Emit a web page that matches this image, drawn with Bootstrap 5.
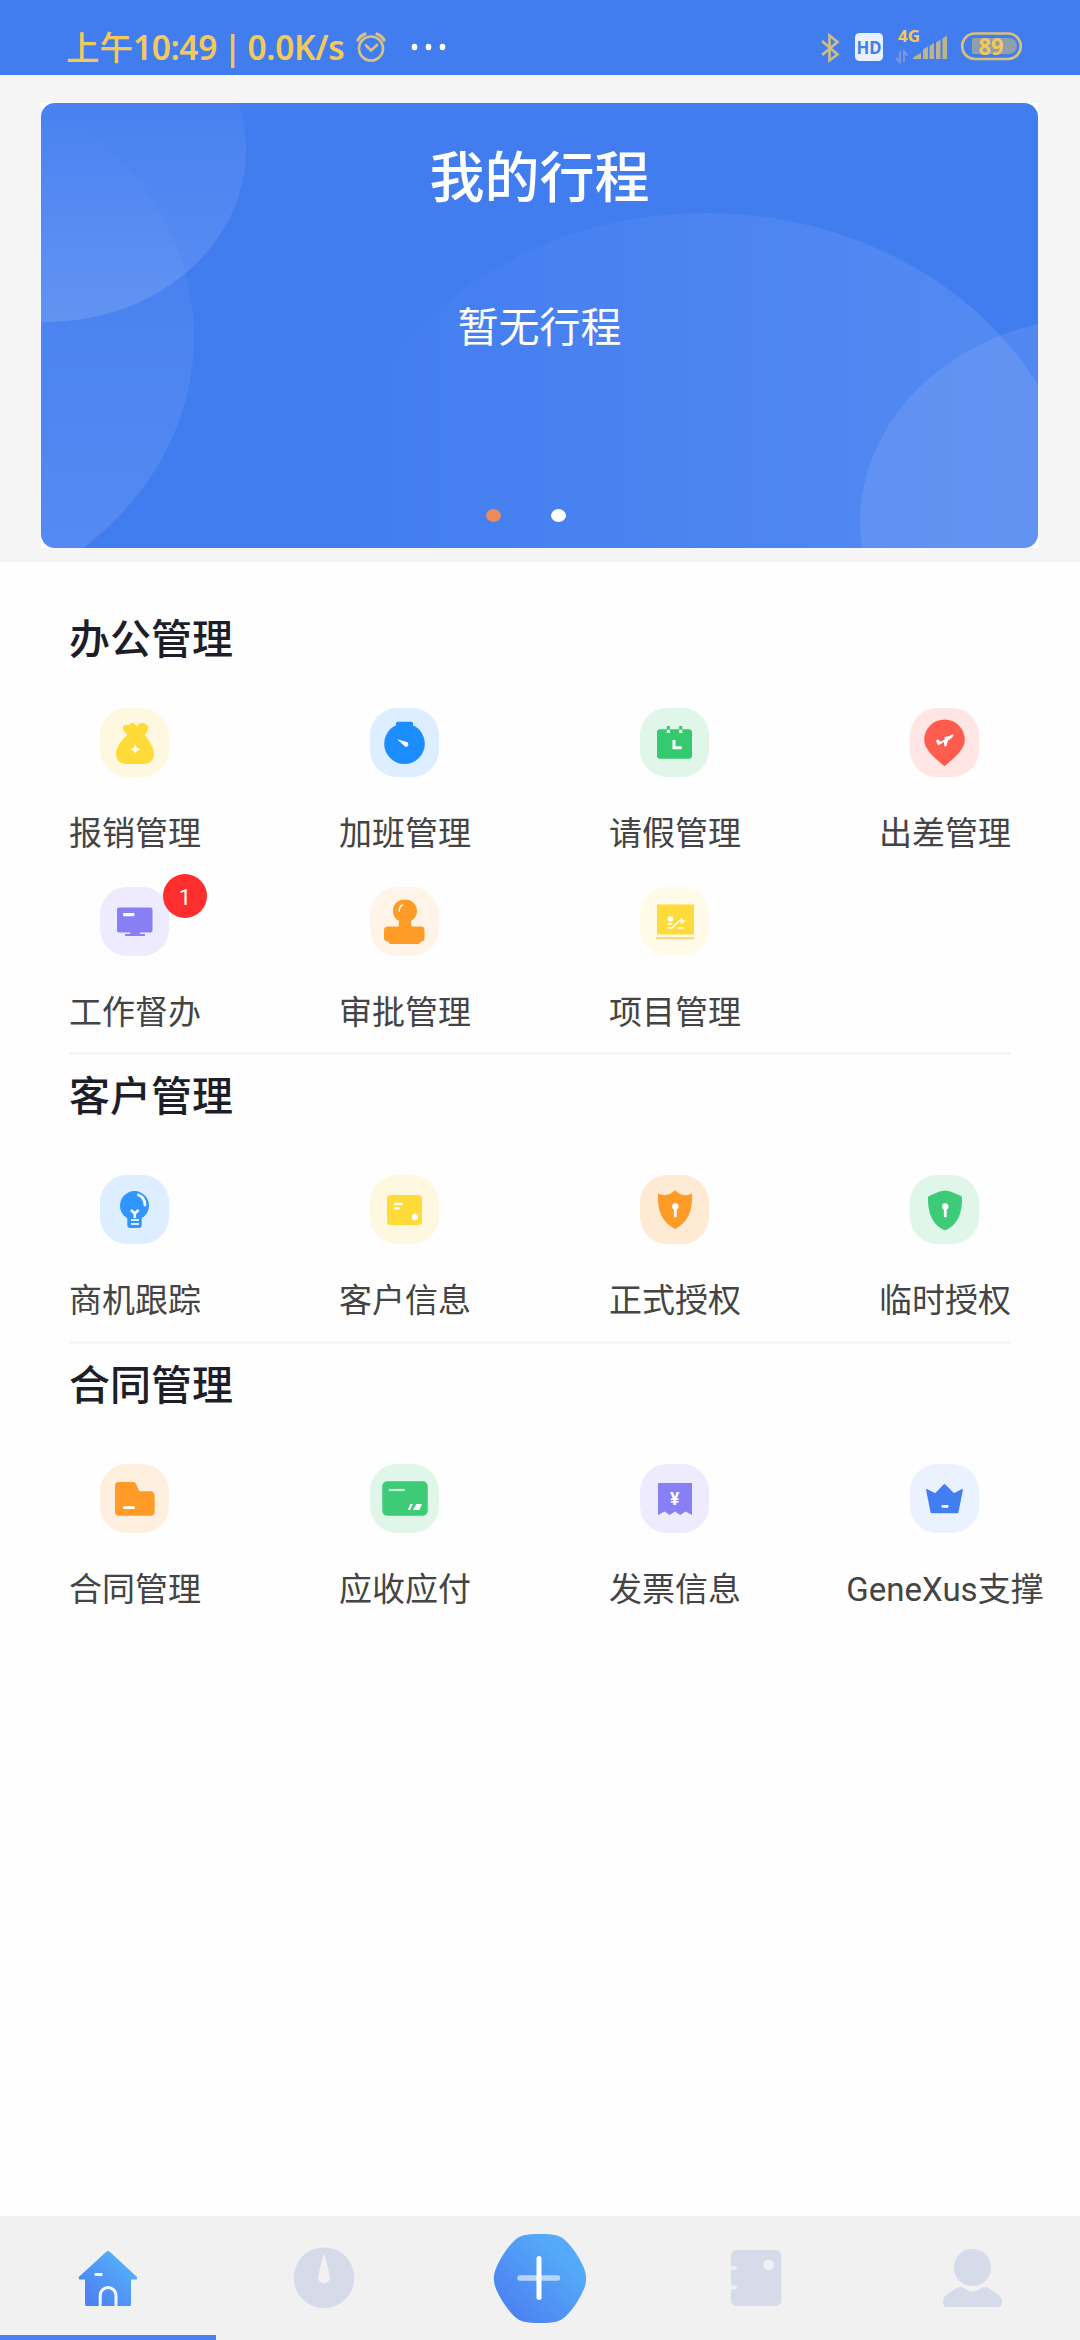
<!DOCTYPE html>
<html lang="zh-CN">
<head>
<meta charset="utf-8">
<meta name="viewport" content="width=device-width, initial-scale=1">
<title>办公管理</title>
<link href="https://cdn.jsdelivr.net/npm/bootstrap@5.3.0/dist/css/bootstrap.min.css" rel="stylesheet">
<script src="https://cdn.jsdelivr.net/npm/bootstrap@5.3.0/dist/js/bootstrap.bundle.min.js"></script>
<style>
  body { width: 1080px; height: 2340px; font-family: Roboto, "Noto Sans CJK SC", sans-serif; overflow: hidden; background: #fefefe; }
  svg { display: block; }
  .statusbar { height: 75px; background: #427df0; color: #f3c95b; padding: 0 53px 0 66px; }
  .clock-text { width: 289px; font: 600 33.5px/40px "Noto Sans", "Noto Sans CJK SC", sans-serif; height: 40px; margin-top: 26px; white-space: pre; word-spacing: -2px; letter-spacing: -.4px; }
  .clock-text .ampm { font-size: 33.5px; font-weight: 500; font-family: "Noto Sans CJK SC", sans-serif; line-height: 40px; letter-spacing: 0; }
  .hero { height: 487px; background: #f5f5f5; padding: 28px 42px 14px 41px; }
  .trip-wrap { height: 445px; background: #fff; }
  .trip { height: 445px; border-radius: 14px; background: #427df0; }
  .trip-art { position: absolute; inset: 0; }
  .trip-title { font-size: 55px; line-height: 80px; font-weight: 500; margin-top: 35px; }
  .trip-note { font-size: 41px; line-height: 60px; margin-top: 80px; }
  .dots { gap: 50px; margin: 151px 28px 0 0; }
  .dot { width: 15px; height: 13px; border-radius: 50%; background: #fff; }
  .dot.on { background: #ee8a59; }
  .sec-title { font-size: 41px; line-height: 60px; font-weight: 500; color: #1e1e28; padding-left: 69px; margin: 0; }
  .sec-a { padding-top: 48px; }
  .sec-b { padding-top: 12px; }
  .sec-a .tiles { margin-top: 38px; }
  .sec-b .tiles { margin-top: 48px; }
  .tile { height: 179px; }
  .last-row .tile { height: 165px; }
  .sec-b .last-row .tile { height: 166px; }
  .tile-icon { width: 69px; height: 69px; border-radius: 27px; margin-right: 1px; }
  .tile-label { font-size: 33px; line-height: 48px; color: #444; margin-top: 33px; white-space: nowrap; }
  .divider { height: 3px; margin: 0 69px; background: #f5f5f5; }
  .count { position: absolute; left: 63px; top: -13px; width: 44px; height: 44px; background: #ff2e2e; color: #fff; font-size: 22px; padding-top: 2px; }
  .tabs { height: 124px; background: #f1f1f1; }
  .tabs .tab { width: 216px; height: 124px; }
  .tab.current { box-shadow: inset 0 -5px #4b80f2; }
</style>
</head>
<body class="d-flex flex-column">

<header class="statusbar d-flex">
  <div class="clock-text flex-shrink-0"><span class="ampm">上午</span>10:49 | 0.0K/s</div>
  <svg width="100" height="75" viewBox="355 0 100 75" class="flex-shrink-0">
    <g fill="none" stroke="#d6c286" stroke-width="2.6" stroke-linecap="round">
      <circle cx="371" cy="48.500" r="12"/>
      <path d="M366 45.500l5 5 6-5.500"/>
      <path d="M358 40q2-4 7-6M384 40q-2-4-7-6" stroke-width="3.2"/>
    </g>
    <g fill="#fff"><ellipse cx="414.500" cy="47" rx="2.800" ry="3.200"/><ellipse cx="428.500" cy="47" rx="2.800" ry="3.200"/><ellipse cx="442.500" cy="47" rx="2.800" ry="3.200"/></g>
  </svg>
  <svg width="212" height="75" viewBox="815 0 212 75" class="ms-auto flex-shrink-0">
    <path d="M822 41l15.500 13.500-8 6V35.500l8 6.500L822 55" fill="none" stroke="#cfbd83" stroke-width="2.600"/>
    <rect x="855" y="33" width="28" height="28" rx="4.500" fill="#eaf1fe"/>
    <text x="869" y="54" font-family="Noto Sans, sans-serif" font-weight="700" font-size="18.500" text-anchor="middle" textLength="25" lengthAdjust="spacingAndGlyphs" fill="#427df0">HD</text>
    <text x="898" y="42" font-family="Noto Sans, sans-serif" font-weight="700" font-size="16.500" textLength="22" lengthAdjust="spacingAndGlyphs" fill="#f3c95b">4G</text>
    <path d="M900 51v11l-4-4M904 62V51.500l3.500 4" fill="none" stroke="#7f9bd0" stroke-width="1.800"/>
    <g fill="#bdb48c">
      <path d="M913 59v-1.500l8-4.500V59zM923 59v-9.500l5-3V59zM929.500 59V46l4.500-3v16zM936 59V42.500l4.500-3V59zM942.500 59V38.500l4.500-3V59z"/>
    </g>
    <rect x="962.200" y="33.500" width="58.500" height="25.500" rx="12.700" fill="none" stroke="#d9c17a" stroke-width="2.700"/>
    <path d="M972 38h37a8 8 0 0 1 0 16h-37z" fill="#909fac"/>
    <text x="991" y="55" font-family="Noto Sans, sans-serif" font-weight="700" font-size="24" text-anchor="middle" textLength="25" lengthAdjust="spacingAndGlyphs" fill="#f3c95b">89</text>
  </svg>
</header>

<section class="hero">
  <div class="trip-wrap">
    <div class="trip position-relative overflow-hidden text-white text-center">
      <svg class="trip-art" width="997" height="445" viewBox="41 103 997 445">
        <defs>
          <linearGradient id="ga" x1="0" y1="103" x2="0" y2="322" gradientUnits="userSpaceOnUse"><stop offset="0" stop-color="#fff" stop-opacity=".035"/><stop offset="1" stop-color="#fff" stop-opacity=".13"/></linearGradient>
          <linearGradient id="gb" x1="0" y1="103" x2="0" y2="548" gradientUnits="userSpaceOnUse"><stop offset="0" stop-color="#fff" stop-opacity="0"/><stop offset="1" stop-color="#fff" stop-opacity=".1"/></linearGradient>
          <linearGradient id="gc" x1="340" y1="0" x2="1038" y2="0" gradientUnits="userSpaceOnUse"><stop offset="0" stop-color="#fff" stop-opacity="0"/><stop offset="1" stop-color="#fff" stop-opacity=".1"/></linearGradient>
          <linearGradient id="gd" x1="860" y1="0" x2="1038" y2="0" gradientUnits="userSpaceOnUse"><stop offset="0" stop-color="#fff" stop-opacity=".09"/><stop offset="1" stop-color="#fff" stop-opacity=".08"/></linearGradient>
        </defs>
        <ellipse cx="46" cy="150" rx="200" ry="172" fill="url(#ga)"/>
        <ellipse cx="-133" cy="337" rx="327" ry="281" fill="url(#gb)"/>
        <ellipse cx="706" cy="535" rx="375" ry="322" fill="url(#gc)"/>
        <ellipse cx="1100" cy="523" rx="240" ry="206" fill="url(#gd)"/>
      </svg>
      <div class="position-relative d-flex flex-column align-items-center">
        <div class="trip-title">我的行程</div>
        <div class="trip-note">暂无行程</div>
        <div class="dots d-flex"><span class="dot on"></span><span class="dot"></span></div>
      </div>
    </div>
  </div>
</section>

<main class="flex-grow-1">
  <section class="sec-a">
    <h2 class="sec-title">办公管理</h2>
    <div class="tiles row g-0">
      <div class="col-3 tile d-flex flex-column align-items-center">
        <div class="tile-icon" style="background:#fff8e0"><svg width="69" height="69"><path d="M27.500 27C25 24 22.500 22 23 19c.5-2.500 4-2 6.500-2.200C31 15 33 14 34 15.300l3 3.200c1-3 4-4.300 7.500-3.200 4 1.500 4.500 4.500 3 8-.8 1.700-2.500 2.500-3 3.700C49 32 54 40 54 45.500 54 52 50 56 44 56H26c-6 0-10-4-10-10.500C16 40 21 32 27.500 27z" fill="#ffdb39"/><path d="M35.300 38.500q.8 2 2.800 2.800-2 .8-2.800 2.800-.8-2-2.800-2.800 2-.8 2.800-2.800z" fill="#fff" stroke="#fff" stroke-width="1.500"/></svg></div>
        <div class="tile-label">报销管理</div>
      </div>
      <div class="col-3 tile d-flex flex-column align-items-center">
        <div class="tile-icon" style="background:#dceeff"><svg width="69" height="69"><g fill="#1b8dff"><circle cx="34.500" cy="35.700" r="20.300"/><rect x="26" y="13.700" width="17" height="9" rx="1.500"/></g><path d="M27 31.300l9.800 2.600c3 1.500 1.200 6-1.800 4.700z" fill="#fff"/></svg></div>
        <div class="tile-label">加班管理</div>
      </div>
      <div class="col-3 tile d-flex flex-column align-items-center">
        <div class="tile-icon" style="background:#dff6e8"><svg width="69" height="69"><rect x="17" y="21.300" width="35" height="29.500" rx="3" fill="#35c970"/><path d="M28.300 18v4M40.700 18v4" stroke="#35c970" stroke-width="3"/><path d="M28.300 21.700V25M40.700 21.700V25" stroke="#e8faef" stroke-width="3.200"/><path d="M34 32v7.800h7.700" fill="none" stroke="#fff" stroke-width="3"/></svg></div>
        <div class="tile-label">请假管理</div>
      </div>
      <div class="col-3 tile d-flex flex-column align-items-center">
        <div class="tile-icon" style="background:#ffe6e4"><svg width="69" height="69"><path d="M34.500 58.300C26 51 14.200 42 14.200 31.800a20.300 20.300 0 0 1 40.600 0C54.800 42 43 51 34.500 58.300z" fill="#ff5c50"/><path d="M26 32l2.500-.3 2.500 2 4-2.500-1-2.200 3-.5 2.500-.5c2.500-1.800 3.500-1.500 4-1-.2 2-3.200 4-5.300 5.200l-1.800 5.800-2 .5-.5-4.500-5.400 3.200c-1.500-.7-2-3.200-2.500-5.200z" fill="#fff"/></svg></div>
        <div class="tile-label">出差管理</div>
      </div>
    </div>
    <div class="row g-0 last-row">
      <div class="col-3 tile d-flex flex-column align-items-center">
        <div class="tile-icon position-relative" style="background:#edebfd"><svg width="69" height="69"><g fill="#897ff5"><rect x="17" y="20.500" width="35.500" height="25" rx="2"/><path d="M30 45h10v2h5v2H25v-2h5z"/></g><rect x="23" y="26" width="11.500" height="3.300" rx="1" fill="#fff"/></svg>
          <span class="count rounded-circle d-flex align-items-center justify-content-center">1</span></div>
        <div class="tile-label">工作督办</div>
      </div>
      <div class="col-3 tile d-flex flex-column align-items-center">
        <div class="tile-icon" style="background:#fff4e7"><svg width="69" height="69"><path d="M28.500 39.500l.5-5.500c-3.500-2-6-5.500-6-10 0-7 5-11.500 11.800-11.500S47 17 47 24c0 4.500-2.500 8-6 10l.5 5.500H51q3.500 0 3.500 3.500v8q0 3.500-3.500 3.500L49 57H20l-2-2.500q-4 0-4-3.500v-8q0-3.500 4-3.500z" fill="#ff9c27"/><path d="M29.200 24q0-4.500 3.300-6" fill="none" stroke="#fff" stroke-width="1.500" stroke-linecap="round"/></svg></div>
        <div class="tile-label">审批管理</div>
      </div>
      <div class="col-3 tile d-flex flex-column align-items-center">
        <div class="tile-icon" style="background:#fffbe8"><svg width="69" height="69"><path d="M17 17.500h37v30H17z" fill="#ffdb39"/><path d="M16.300 51.200h38" stroke="#f0d772" stroke-width="2"/><g fill="none" stroke="#fff" stroke-width="1.500"><path d="M27.500 37h5M27.500 41h4.500l7-7h5M38 41h5.500M40.500 31.500l3.500 2.500-3 2.500"/></g><circle cx="30.500" cy="32" r="2.800" fill="#fff"/></svg></div>
        <div class="tile-label">项目管理</div>
      </div>
    </div>
    <div class="divider"></div>
  </section>

  <section class="sec-b">
    <h2 class="sec-title">客户管理</h2>
    <div class="tiles row g-0 last-row">
      <div class="col-3 tile d-flex flex-column align-items-center">
        <div class="tile-icon" style="background:#dceeff"><svg width="69" height="69"><path d="M27.300 43.200A14.500 14.500 0 1 1 41.700 43.200V50q0 3-3 3h-8.400q-3 0-3-3z" fill="#3095ff"/><path d="M31 35l3.800 3.500 3.800-3.500M34.800 38v5" fill="none" stroke="#fff" stroke-width="2.500"/><path d="M31 45h8M31 49h8" stroke="#d8edff" stroke-width="2"/><path d="M38.500 20q6.300 2.500 6.500 10" fill="none" stroke="#fff" stroke-width="2.800" stroke-linecap="round"/></svg></div>
        <div class="tile-label">商机跟踪</div>
      </div>
      <div class="col-3 tile d-flex flex-column align-items-center">
        <div class="tile-icon" style="background:#fff8e0"><svg width="69" height="69"><rect x="17" y="20" width="35" height="30" rx="3.500" fill="#ffdb39"/><path d="M24 29h8.700M24 33.300h5.500" stroke="#fff" stroke-width="2.300"/><circle cx="45" cy="42" r="3.200" fill="#fff"/></svg></div>
        <div class="tile-label">客户信息</div>
      </div>
      <div class="col-3 tile d-flex flex-column align-items-center">
        <div class="tile-icon" style="background:#ffead3"><svg width="69" height="69"><path d="M18 18.500q9 4.500 17-3.200 8 7.700 17 3.200C53 36 47.500 47.500 35 54 22.500 47.500 17 36 18 18.500z" fill="#ff9c27"/><circle cx="35.300" cy="31.500" r="3.200" fill="#fff"/><path d="M35.300 32v9" stroke="#fff" stroke-width="2.800" stroke-linecap="round"/></svg></div>
        <div class="tile-label">正式授权</div>
      </div>
      <div class="col-3 tile d-flex flex-column align-items-center">
        <div class="tile-icon" style="background:#dff6e8"><svg width="69" height="69"><path d="M18 22q0-1 8-4 9-5 18 0 8 3 8 4C52.500 38 47.500 49.500 37 54.400q-2 1-4 0C22.500 49.500 17.500 38 18 22z" fill="#3dcb77"/><circle cx="35.300" cy="31.500" r="3.200" fill="#fff"/><path d="M35.300 32v9" stroke="#fff" stroke-width="2.800" stroke-linecap="round"/></svg></div>
        <div class="tile-label">临时授权</div>
      </div>
    </div>
    <div class="divider"></div>
  </section>

  <section class="sec-b">
    <h2 class="sec-title">合同管理</h2>
    <div class="tiles row g-0 last-row">
      <div class="col-3 tile d-flex flex-column align-items-center">
        <div class="tile-icon" style="background:#ffefde"><svg width="69" height="69"><path d="M19 18h14.500q1.500 0 2.500 2l3.300 7.300H50q4.700 0 4.700 4.700v16q0 3.700-4 3.700H19q-4 0-4-4V22q0-4 4-4z" fill="#ff9c27"/><rect x="23" y="42.300" width="11.800" height="2.800" rx="1" fill="#fff"/></svg></div>
        <div class="tile-label">合同管理</div>
      </div>
      <div class="col-3 tile d-flex flex-column align-items-center">
        <div class="tile-icon" style="background:#dff6e8"><svg width="69" height="69"><rect x="12.300" y="17.300" width="45.400" height="34.500" rx="5" fill="#3dcb77"/><path d="M19 26h15.700" stroke="#c9f3d9" stroke-width="2.200"/><path d="M40.500 40h2.300l-2.600 6h-2.500zM46.300 40H52l-2.600 6H43z" fill="#fff"/></svg></div>
        <div class="tile-label">应收应付</div>
      </div>
      <div class="col-3 tile d-flex flex-column align-items-center">
        <div class="tile-icon" style="background:#edebfd"><svg width="69" height="69"><path d="M18 19h34v32l-6.500-3.500-5.300 3.500-5.200-3.500-5.200 3.500-5.300-3.500L18 51z" fill="#897ff5"/><text x="34.800" y="41.200" font-family="Roboto, sans-serif" font-weight="700" font-size="17.500" text-anchor="middle" fill="#fff">¥</text></svg></div>
        <div class="tile-label">发票信息</div>
      </div>
      <div class="col-3 tile d-flex flex-column align-items-center">
        <div class="tile-icon" style="background:#eaf2ff"><svg width="69" height="69"><path d="M17 26l8.500 4.200 9-9.200 9.200 9.200L52 26l-4.500 22.300h-26z" fill="#437ef1" stroke="#437ef1" stroke-width="1.800" stroke-linejoin="round"/><rect x="31.500" y="41" width="7" height="2.700" rx="1" fill="#fff"/></svg></div>
        <div class="tile-label">GeneXus支撑</div>
      </div>
    </div>
  </section>
</main>

<nav class="tabs d-flex">
  <a class="tab current" href="#"><svg width="216" height="124" viewBox="0 2216 216 124">
    <defs><linearGradient id="gh" x1="0" y1="1" x2="1" y2="0"><stop offset=".15" stop-color="#4c82f2"/><stop offset=".75" stop-color="#54aaf8"/></linearGradient></defs>
    <path d="M108 2251q1 0 2 1l27 25v1.500q0 1-1 1h-5V2304.500q0 1.500-1.500 1.500H87q-2 0-2-1.500V2279.500h-5q-1.200 0-1.200-1V2277l27.200-25q1-1 2-1z" fill="url(#gh)"/>
    <path d="M100.200 2306v-10.500a7.900 7.900 0 0 1 15.800 0V2306" fill="none" stroke="#f1f5fd" stroke-width="3"/>
    <rect x="94.500" y="2273" width="8" height="3" rx="1" fill="#fff"/></svg></a>
  <a class="tab" href="#"><svg width="216" height="124" viewBox="216 2216 216 124">
    <circle cx="324" cy="2277.800" r="30.300" fill="#d5dbe9"/>
    <path d="M322.800 2256q1.200-2 2.400 0l4.600 20.500a5.900 5.900 0 1 1-11.600 0z" fill="#f1f1f1"/></svg></a>
  <a class="tab" href="#"><svg width="216" height="124" viewBox="432 2216 216 124">
    <path d="M540 2234C554 2234 560 2235 566.500 2241.500C574 2249 580 2259 583.500 2267C587 2275 587 2282 583.500 2290C580 2298 574 2308 566.500 2315.500C560 2322 554 2323 540 2323C526 2323 520 2322 513.500 2315.500C506 2308 500 2298 496.500 2290C493 2282 493 2275 496.500 2267C500 2259 506 2249 513.500 2241.500C520 2235 526 2234 540 2234z" fill="url(#gh)"/>
    <path d="M520 2278h37.500" stroke="#b9d5fc" stroke-width="5.500" stroke-linecap="round"/>
    <path d="M539 2258.500v39" stroke="#fff" stroke-width="5" stroke-linecap="round"/></svg></a>
  <a class="tab" href="#"><svg width="216" height="124" viewBox="648 2216 216 124">
    <rect x="731" y="2250" width="50.300" height="56" rx="5.500" fill="#d5dbe9"/>
    <g fill="#f1f1f1"><circle cx="768.500" cy="2265" r="5.400"/><path d="M730 2266.200h5a1.900 1.900 0 0 1 0 3.800h-5zM730 2285.500h5a1.900 1.900 0 0 1 0 3.800h-5z"/></g></svg></a>
  <a class="tab" href="#"><svg width="216" height="124" viewBox="864 2216 216 124">
    <g fill="#d5dbe9"><circle cx="972.500" cy="2267.500" r="18.600"/><path d="M956 2288.500q4-2.500 7.500-.5l5 2.700q4 1.700 8 0l5-2.700q3.500-2 7.500.5l9 6q4 3 4 7 0 5.500-4 5.500h-51q-4 0-4-5.500 0-4 4-7z"/></g></svg></a>
</nav>
</body>
</html>
